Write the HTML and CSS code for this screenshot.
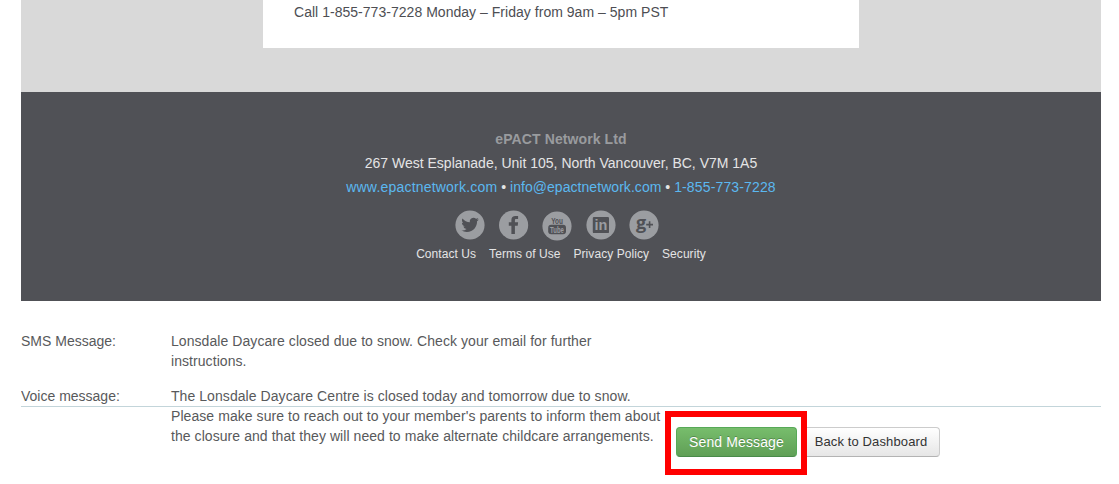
FILE: index.html
```html
<!DOCTYPE html>
<html lang="en">
<head>
  <meta charset="UTF-8">
  <meta name="viewport" content="width=device-width, initial-scale=1">
  <title>Preview Message</title>
  <link rel="stylesheet" href="styles.css">
</head>
<body>
  <div class="email">
    <div class="email-body">
      <p>Call 1-855-773-7228 Monday – Friday from 9am – 5pm PST</p>
    </div>
  </div>

  <div class="footer">
    <h4>ePACT Network Ltd</h4>
    <p class="address">267 West Esplanade, Unit 105, North Vancouver, BC, V7M 1A5</p>
    <p class="contact"><a href="#" class="site">www.epactnetwork.com</a> • <a href="#" class="mail">info@epactnetwork.com</a> • <a href="#" class="phone">1-855-773-7228</a></p>

    <div class="social">
      <a href="#" aria-label="Twitter">
        <svg viewBox="0 0 30 30">
          <circle class="disc" cx="15" cy="15" r="14.6"/>
          <path class="glyph" transform="translate(6.3 6.1) scale(.73)" d="M23.95 4.57a10 10 0 0 1-2.82.77 4.96 4.96 0 0 0 2.16-2.72c-.95.55-2 .95-3.13 1.18a4.92 4.92 0 0 0-8.38 4.48C7.69 8.1 4.07 6.13 1.64 3.16a4.82 4.82 0 0 0-.67 2.48c0 1.71.87 3.21 2.19 4.1a4.9 4.9 0 0 1-2.23-.62v.06a4.92 4.92 0 0 0 3.95 4.83 5 5 0 0 1-2.21.08 4.94 4.94 0 0 0 4.6 3.42A9.87 9.87 0 0 1 0 19.54a14 14 0 0 0 7.55 2.21c9.05 0 14-7.5 14-13.98 0-.21 0-.42-.02-.63a9.94 9.94 0 0 0 2.46-2.55z"/>
        </svg>
      </a>
      <a href="#" aria-label="Facebook">
        <svg viewBox="0 0 30 30">
          <circle class="disc" cx="14.6" cy="15" r="14.6"/>
          <path class="glyph" d="M12.4 24v-8.3H9.8v-3.4h2.6V10c0-2.9 1.5-4.1 4.1-4.1h2.6v3.2h-1.8c-1.1 0-1.4.5-1.4 1.4v1.8h3.2l-.4 3.4h-2.8V24z"/>
        </svg>
      </a>
      <a href="#" aria-label="YouTube" class="low">
        <svg viewBox="0 0 30 30">
          <circle class="disc" cx="15" cy="15" r="14.6"/>
          <text class="you" transform="translate(15 12.8) scale(.68 1)">You</text>
          <rect class="glyph" x="6.2" y="13.8" width="17.8" height="9.4" rx="3"/>
          <text class="tube" transform="translate(15 21.6) scale(.7 1)">Tube</text>
        </svg>
      </a>
      <a href="#" aria-label="LinkedIn">
        <svg viewBox="0 0 30 30">
          <circle class="disc" cx="15" cy="15" r="14.6"/>
          <rect class="glyph" x="6.8" y="6.9" width="16.2" height="16.2" rx="1.2"/>
          <text class="in" x="14.9" y="20.2">in</text>
        </svg>
      </a>
      <a href="#" aria-label="Google Plus">
        <svg viewBox="0 0 30 30">
          <circle class="disc" cx="15" cy="15" r="14.6"/>
          <text class="g" x="12.2" y="18.8">g</text>
          <path class="plus" d="M17.2 14.6h6.8M20.6 11.2v6.8"/>
        </svg>
      </a>
    </div>

    <div class="links">
      <a href="#">Contact Us</a>
      <a href="#">Terms of Use</a>
      <a href="#">Privacy Policy</a>
      <a href="#">Security</a>
    </div>
  </div>

  <div class="details">
    <div class="row">
      <div class="label">SMS Message:</div>
      <div class="value">Lonsdale Daycare closed due to snow. Check your email for further instructions.</div>
    </div>
    <div class="row voice">
      <div class="label">Voice message:</div>
      <div class="value">The Lonsdale Daycare Centre is closed today and tomorrow due to snow.<br>Please make sure to reach out to your member's parents to inform them about<br>the closure and that they will need to make alternate childcare arrangements.</div>
    </div>
  </div>

  <div class="actions">
    <div class="highlight">
      <button class="btn btn-success">Send Message</button>
    </div>
    <button class="btn btn-back">Back to Dashboard</button>
  </div>
</body>
</html>
```
FILE: styles.css
```css
body {
  margin: 0 18px 0 21px;
  height: 484px;
  overflow: hidden;
  background: #fff;
  color: #58595b;
  font-family: "Liberation Sans", Arial, sans-serif;
  font-size: 14px;
  line-height: 20px;
}
p, h4 {
  margin: 0;
}
a {
  color: #5bb8f0;
  text-decoration: none;
}
.email {
  height: 92px;
  background: #d9d9d9;
}
.email-body {
  box-sizing: border-box;
  width: 596px;
  height: 48px;
  margin-left: 242px;
  padding: 2px 31px;
  background: #fff;
  color: #4d4e53;
  letter-spacing: 0.03px;
}

/* footer */
.footer {
  box-sizing: border-box;
  height: 209px;
  padding-top: 35px;
  background: #505156;
  color: #e4e4e5;
  line-height: 24px;
  text-align: center;
}
.footer h4 {
  color: #999b9e;
  font-size: 14px;
  letter-spacing: 0.1px;
}
.site {
  letter-spacing: 0.2px;
}
.mail {
  letter-spacing: 0.05px;
}
.phone {
  letter-spacing: 0.14px;
}
.social {
  display: flex;
  justify-content: center;
  gap: 13.5px;
  height: 30px;
  margin-top: 11px;
  padding-right: 8px;
}
.social svg {
  display: block;
  width: 30px;
  height: 30px;
  overflow: visible;
  opacity: 0.99;
}
.social .low {
  padding-top: 1px;
}
.disc {
  fill: #9c9ea2;
}
.glyph {
  fill: #505156;
}
.social text {
  fill: #505156;
  font-family: "Liberation Sans", Arial, sans-serif;
  font-weight: bold;
  text-anchor: middle;
}
.social .you {
  font-size: 9.5px;
}
.social .tube {
  fill: #9c9ea2;
  font-size: 8.5px;
}
.social .in {
  fill: #9c9ea2;
  font-size: 14.5px;
}
.social .g {
  font-family: "Open Sans", sans-serif;
  font-size: 18px;
}
.plus {
  stroke: #505156;
  stroke-width: 1.6;
}
.links {
  display: flex;
  justify-content: center;
  gap: 13px;
  margin-top: 4px;
  font-size: 12px;
  letter-spacing: 0.06px;
  line-height: 20px;
}
.links a {
  color: #e4e4e5;
}

/* message details */
.details {
  padding-top: 30px;
}
.row {
  display: flex;
  margin-bottom: 15px;
}
.label {
  width: 150px;
}
.value {
  width: 470px;
  letter-spacing: 0.065px;
}
.voice {
  height: 20px;
  margin-bottom: 0;
}
.voice .value {
  width: auto;
  white-space: nowrap;
}

/* buttons */
.actions {
  display: flex;
  padding: 20px 0 0 655px;
  border-top: 1px solid #c3d5da;
}
.btn {
  box-sizing: border-box;
  height: 30px;
  padding: 0;
  border: 1px solid #bbb;
  border-radius: 4px;
  font-family: "Liberation Sans", Arial, sans-serif;
  letter-spacing: 0.12px;
}
.btn-success {
  width: 121px;
  border-color: #57a957 #57a957 #498a49;
  background: linear-gradient(#77bd6c, #609f56);
  color: #fff;
  font-size: 14px;
  text-shadow: 0 -1px 0 rgba(0,0,0,0.25);
}
.btn-back {
  width: 138px;
  margin-left: 5px;
  padding-bottom: 2px;
  border-color: #ccc #ccc #b3b3b3;
  background: linear-gradient(#fff, #e6e6e6);
  color: #333;
  font-size: 13px;
}
.highlight {
  position: relative;
}
.highlight::after {
  content: "";
  position: absolute;
  top: -16px;
  left: -11px;
  width: 130px;
  height: 52px;
  border: 6px solid #f00;
}
```
